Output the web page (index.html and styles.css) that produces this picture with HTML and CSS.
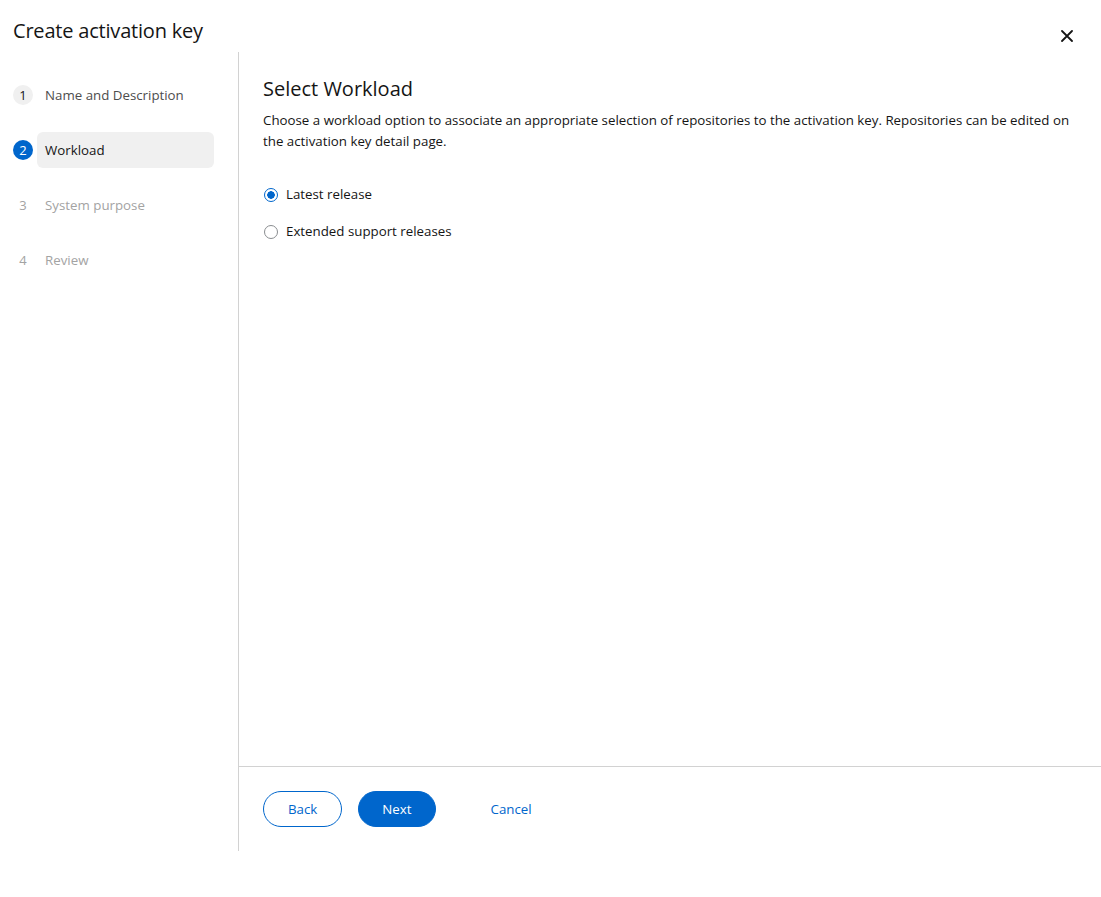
FILE: index.html
```html
<!DOCTYPE html>
<html lang="en">
<head>
    <meta charset="UTF-8">
    <meta name="viewport" content="width=device-width, initial-scale=1.0">
    <title>Create activation key</title>
    <link rel="stylesheet" href="styles.css">
</head>
<body>
    <div class="modal">
        <header class="modal-header">
            <h1 class="modal-title">Create activation key</h1>
            <button class="close-btn" aria-label="Close">
                <svg width="12" height="12" viewBox="0 0 12 12">
                    <path d="M1 1 L11 11 M11 1 L1 11" stroke="#151515" stroke-width="1.8" stroke-linecap="round"/>
                </svg>
            </button>
        </header>

        <div class="wizard">
            <nav class="wizard-nav">
                <ol class="steps">
                    <li class="step done">
                        <span class="step-num">1</span>
                        <span class="step-link">Name and Description</span>
                    </li>
                    <li class="step current">
                        <span class="step-num">2</span>
                        <span class="step-link">Workload</span>
                    </li>
                    <li class="step disabled">
                        <span class="step-num">3</span>
                        <span class="step-link">System purpose</span>
                    </li>
                    <li class="step disabled">
                        <span class="step-num">4</span>
                        <span class="step-link">Review</span>
                    </li>
                </ol>
            </nav>

            <main class="wizard-main">
                <div class="wizard-body">
                    <h2 class="section-title">Select Workload</h2>
                    <p class="section-text">Choose a workload option to associate an appropriate selection of repositories to the activation key. Repositories can be edited on the activation key detail page.</p>

                    <div class="radio-group">
                        <label class="radio">
                            <input type="radio" name="workload" checked>
                            <span class="radio-mark"></span>
                            Latest release
                        </label>
                        <label class="radio">
                            <input type="radio" name="workload">
                            <span class="radio-mark"></span>
                            Extended support releases
                        </label>
                    </div>
                </div>

                <footer class="wizard-footer">
                    <button class="btn btn-secondary">Back</button>
                    <button class="btn btn-primary">Next</button>
                    <button class="btn btn-link">Cancel</button>
                </footer>
            </main>
        </div>
    </div>
</body>
</html>
```

FILE: styles.css
```css
* {
    box-sizing: border-box;
}
body {
    margin: 0;
    font-family: "Open Sans", "Liberation Sans", sans-serif;
    font-size: 13.3px;
    color: #151515;
    background: #fff;
}
.modal {
    height: 897px;
    display: flex;
    flex-direction: column;
}
.modal-header {
    height: 52px;
    display: flex;
    justify-content: space-between;
    align-items: flex-start;
    padding: 0 15px 0 13px;
}
.modal-title {
    margin: 0;
    padding-top: 16px;
    font-size: 20px;
    font-weight: 400;
    line-height: 30px;
    letter-spacing: -0.2px;
}
.close-btn {
    border: none;
    background: none;
    width: 38px;
    height: 38px;
    margin-top: 17px;
    display: flex;
    align-items: center;
    justify-content: center;
    cursor: pointer;
}
.wizard {
    display: flex;
    height: 799px;
}
.wizard-nav {
    width: 239px;
    border-right: 1px solid #d2d2d2;
    flex-shrink: 0;
}
.steps {
    list-style: none;
    margin: 0;
    padding: 25px 24px 0 13px;
    display: flex;
    flex-direction: column;
    gap: 19px;
}
.step {
    display: flex;
    align-items: center;
    gap: 4px;
}
.step-num {
    width: 20px;
    height: 20px;
    border-radius: 50%;
    display: flex;
    align-items: center;
    justify-content: center;
    font-size: 13px;
    color: #4d4d4d;
}
.step-link {
    flex: 1;
    height: 36px;
    line-height: 36px;
    padding: 0 8px;
    border-radius: 6px;
    color: #4d4d4d;
}
.step.done .step-num {
    background: #f0f0f0;
    color: #151515;
}
.step.current .step-num {
    background: #0066cc;
    color: #fff;
}
.step.current .step-link {
    background: #f0f0f0;
    color: #151515;
}
.step.disabled .step-num,
.step.disabled .step-link {
    color: #a3a3a3;
}
.wizard-main {
    flex: 1;
    display: flex;
    flex-direction: column;
}
.wizard-body {
    flex: 1;
    padding: 24px 28px 24px 24px;
}
.section-title {
    margin: 0 0 8px;
    font-size: 20px;
    font-weight: 500;
    line-height: 26px;
}
.section-text {
    margin: 0 0 32px;
    line-height: 21px;
}
.radio-group {
    display: flex;
    flex-direction: column;
    gap: 16px;
}
.radio {
    display: flex;
    align-items: center;
    gap: 8px;
    line-height: 21px;
    cursor: pointer;
}
.radio input {
    display: none;
}
.radio-mark {
    width: 14px;
    height: 14px;
    margin-left: 1px;
    border-radius: 50%;
    border: 1px solid #8a8d90;
    background: #fff;
}
.radio input:checked + .radio-mark {
    border-color: #0066cc;
    background: radial-gradient(circle, #0066cc 0 3.5px, #fff 4px);
}
.wizard-footer {
    height: 85px;
    border-top: 1px solid #d2d2d2;
    padding: 24px;
    display: flex;
    gap: 16px;
}
.btn {
    height: 36px;
    padding: 0 24px;
    border-radius: 999px;
    font: inherit;
    cursor: pointer;
}
.btn-secondary {
    background: #fff;
    color: #0066cc;
    border: 1px solid #0066cc;
}
.btn-primary {
    background: #0066cc;
    color: #fff;
    border: 1px solid #0066cc;
    padding: 0 23px;
}
.btn-link {
    background: none;
    border: none;
    color: #0066cc;
    margin-left: 15px;
}
```
